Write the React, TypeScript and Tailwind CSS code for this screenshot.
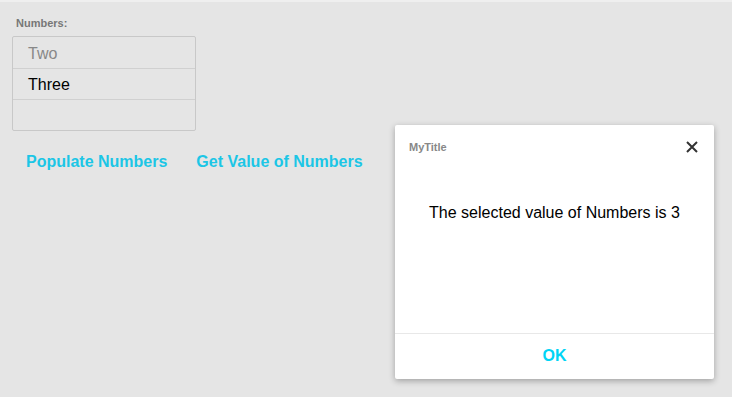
import React from 'react';

const rows = [
  { label: 'Two', muted: true },
  { label: 'Three', muted: false },
  { label: '', muted: false },
];

const App: React.FC = () => {
  return (
    <div className="relative w-[732px] h-[397px] bg-[#e5e5e5] overflow-hidden font-['Liberation_Sans',Arial,sans-serif] border-t-2 border-[#efefef]">
      <div className="pl-[16px] pt-[15px] text-[11px] font-bold text-[#777] leading-[13px]">Numbers:</div>
      <div className="ml-[12px] mt-[6px] w-[184px] border border-[#c8c8c8] rounded-[2px]">
        {rows.map((row, i) => (
          <div
            key={i}
            className={`h-[31px] pl-[15px] pt-[2px] flex items-center text-[16px] ${i > 0 ? 'border-t border-[#d0d0d0]' : ''} ${row.muted ? 'text-[#888]' : 'text-black'}`}
          >
            {row.label}
          </div>
        ))}
      </div>
      <div className="flex gap-[29px] pl-[26px] pt-[19px] text-[16px] font-bold text-[#1cc6e6]">
        <button>Populate Numbers</button>
        <button>Get Value of Numbers</button>
      </div>

      <div className="absolute left-[395px] top-[123px] w-[319px] h-[254px] bg-white rounded-[2px] shadow-[0_2px_6px_rgba(0,0,0,0.3)] flex flex-col">
        <div className="flex items-center justify-between pl-[14px] pr-[16px] pt-[14px]">
          <span className="text-[11px] font-bold text-[#888]">MyTitle</span>
          <svg width="12" height="12" viewBox="0 0 12 12" className="-mt-[1px]">
            <path d="M1 1L11 11M11 1L1 11" stroke="#333" strokeWidth="2" />
          </svg>
        </div>
        <div className="flex-1 pt-[45px] text-center text-[16px] text-black">
          The selected value of Numbers is 3
        </div>
        <div className="h-[46px] pb-[2px] border-t border-[#e8e8e8] flex items-center justify-center">
          <button className="text-[16px] font-bold text-[#00d4f5]">OK</button>
        </div>
      </div>
    </div>
  );
};

export default App;
